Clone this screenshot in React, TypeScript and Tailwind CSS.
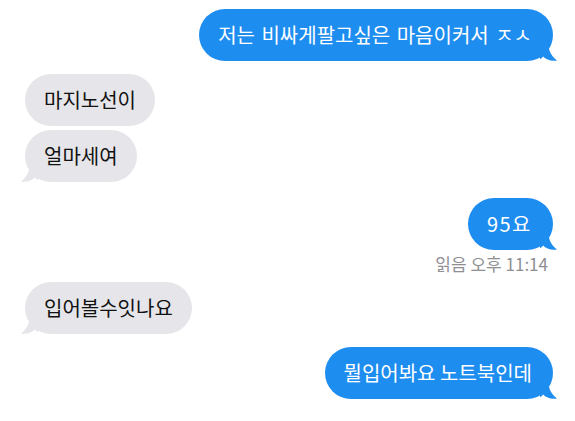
type Msg = {
  id: number;
  text: string;
  mine: boolean;
  tail: boolean;
  gap: string;
  extra?: string;
};

const messages: Msg[] = [
  { id: 1, text: "저는 비싸게팔고싶은 마음이커서 ㅈㅅ", mine: true, tail: true, gap: "mt-[9px]", extra: "[word-spacing:2px]" },
  { id: 2, text: "마지노선이", mine: false, tail: false, gap: "mt-[13px]" },
  { id: 3, text: "얼마세여", mine: false, tail: true, gap: "mt-[4px]" },
  { id: 4, text: "95요", mine: true, tail: true, gap: "mt-[16px]", extra: "tracking-[1.5px]" },
  { id: 5, text: "입어볼수잇나요", mine: false, tail: true, gap: "mt-[8px]" },
  { id: 6, text: "뭘입어봐요 노트북인데", mine: true, tail: true, gap: "mt-[13px]" },
];

function Tail({ mine }: { mine: boolean }) {
  return (
    <svg
      width="18"
      height="20"
      viewBox="0 0 18 20"
      className={`absolute bottom-0 ${mine ? "-right-[5px]" : "-left-[5px] -scale-x-100"}`}
    >
      <path
        d="M0 0 H8 C8 8 10.5 14.5 17 19.5 C11 20.5 6 18.5 3 15.5 C2 17 1 18 0 18 Z"
        fill={mine ? "#1e8df0" : "#e6e6ea"}
      />
    </svg>
  );
}

function Bubble({ msg }: { msg: Msg }) {
  return (
    <div className={`relative ${msg.gap} ${msg.mine ? "self-end mr-[22px]" : "self-start ml-[25px]"}`}>
      {msg.tail && <Tail mine={msg.mine} />}
      <div
        className={`relative rounded-full px-[19px] py-[13px] text-[20px] leading-[26px] whitespace-nowrap ${
          msg.mine ? "bg-[#1e8df0] text-white pr-[21px]" : "bg-[#e6e6ea] text-[#111]"
        } ${msg.extra ?? ""}`}
      >
        {msg.text}
      </div>
    </div>
  );
}

export default function App() {
  return (
    <div className="w-[575px] h-[421px] bg-white overflow-hidden flex flex-col font-['Noto_Sans_CJK_KR','Noto_Sans',sans-serif]">
      {messages.slice(0, 4).map((m) => (
        <Bubble key={m.id} msg={m} />
      ))}
      <div className="self-end mr-[27px] mt-[4px] text-[17px] leading-[20px] text-[#8e8e93]">
        읽음 오후 11:14
      </div>
      {messages.slice(4).map((m) => (
        <Bubble key={m.id} msg={m} />
      ))}
    </div>
  );
}
